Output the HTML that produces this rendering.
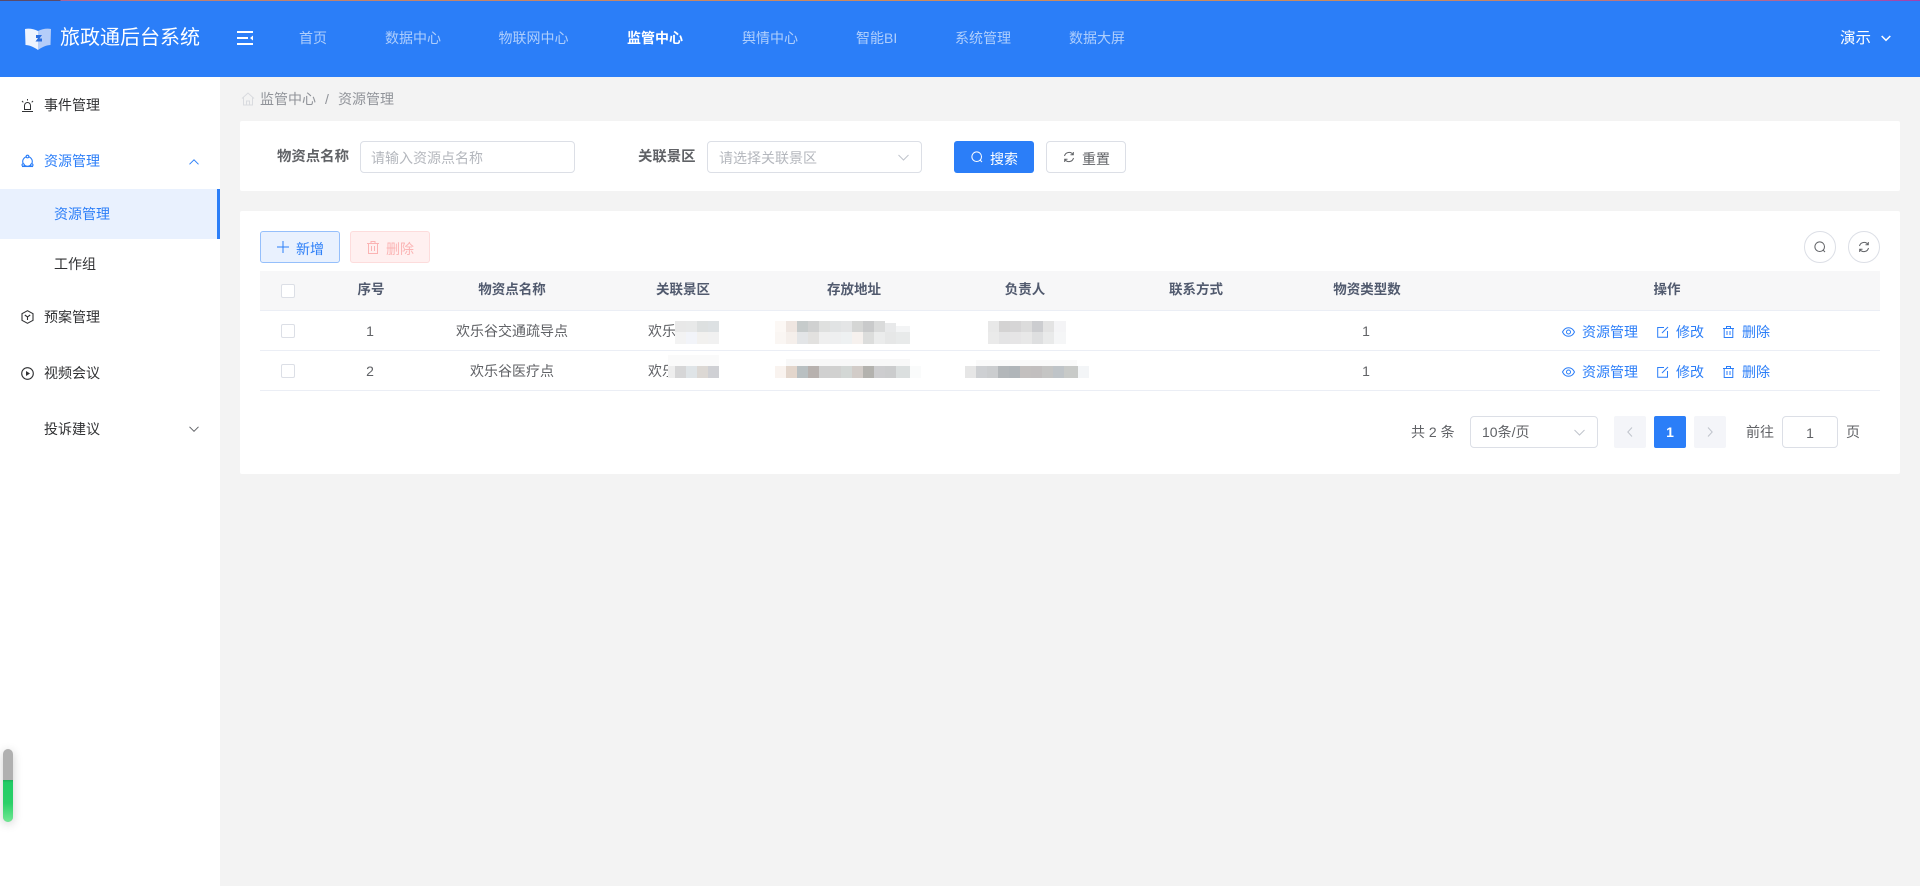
<!DOCTYPE html>
<html lang="zh-CN">
<head>
<meta charset="utf-8">
<title>资源管理</title>
<style>
*{box-sizing:border-box;margin:0;padding:0}
html,body{width:1920px;height:886px;overflow:hidden;background:#f3f3f3;font-family:"Liberation Sans","Noto Sans CJK SC",sans-serif;font-size:14px;color:#606266}
.a{position:absolute;white-space:nowrap}
.t{position:absolute;white-space:nowrap;line-height:20px;height:20px}
.c{position:absolute;white-space:nowrap;line-height:20px;height:20px;width:200px;text-align:center}
.n{color:rgba(255,255,255,.62);top:28px}
.h{font-weight:700;color:#515a6e;top:280px;font-size:13.500px}
.b{border:1px solid #dcdfe6;background:#fff;border-radius:4px}
.cb{position:absolute;left:281px;width:14px;height:14px;border:1px solid #dcdfe6;border-radius:2px;background:#fff}
.l{color:#2b7ef8}
.m{color:#303133}
svg{position:absolute;overflow:visible;fill:none}
</style>
</head>
<body>
<!-- header -->
<div class="a" style="left:0;top:0;width:1920px;height:77px;background:#2b7ef8"></div>
<div class="a" style="left:0;top:0;width:1920px;height:1px;background:linear-gradient(90deg,#5a4a6a 0,#5a4a6a 60px,#a8649a 61px,#c08070 170px,#cf8a5c 50%,#c98a60 75%,#b0609a 95%,#a040b0 100%)"></div>
<svg style="left:24px;top:28px" width="28" height="22" viewBox="0 0 28 22"><path d="M1 1C5 0 10 1 14 3V22C10 19 5 17 1.500 17Z" fill="#eef3fe"/><path d="M27 1C23 0 18 1 14 3V22C18 19 23 17 26.500 17Z" fill="#b5cdf9"/><path d="M12 7h6l-2.500 3.500H18v3h-6.500l2.500-3.500h-2z" fill="#2b6ee0"/></svg>
<div class="t" style="left:60px;top:25px;font-size:20px;line-height:26px;height:26px;color:#fff">旅政通后台系统</div>
<svg style="left:237px;top:31px" width="16" height="14" viewBox="0 0 16 14" fill="#fff"><rect x="0" y="0" width="16" height="2" fill="#fff"/><rect x="0" y="6" width="11" height="2" fill="#fff"/><rect x="0" y="12" width="16" height="2" fill="#fff"/><path d="M16 4.500v5l-3-2.500z" fill="#fff"/></svg>
<div class="t n" style="left:299px">首页</div>
<div class="t n" style="left:385px">数据中心</div>
<div class="t n" style="left:498.500px">物联网中心</div>
<div class="t n" style="left:627px;color:#fff;font-weight:700">监管中心</div>
<div class="t n" style="left:742px">舆情中心</div>
<div class="t n" style="left:856px">智能BI</div>
<div class="t n" style="left:955px">系统管理</div>
<div class="t n" style="left:1069px">数据大屏</div>
<div class="t" style="left:1840px;top:29px;font-size:15.500px;color:#fff">演示</div>
<svg style="left:1881px;top:35px" width="10" height="7" viewBox="0 0 10 7"><path d="M.7 1l4.300 4.300L9.300 1" stroke="#fff" stroke-width="1.500"/></svg>

<!-- sidebar -->
<div class="a" style="left:0;top:77px;width:220px;height:809px;background:#fff"></div>
<div class="a" style="left:0;top:189px;width:220px;height:50px;background:#e9f1fe"></div>
<div class="a" style="left:217px;top:189px;width:3px;height:50px;background:#2b7ef8"></div>
<svg style="left:21px;top:99px" width="13" height="13" viewBox="0 0 13 13" stroke="#303133" stroke-width="1"><path d="M1 12.500h11M3 10.500h7M3.500 10.500V6.500a3 3 0 016 0v4M6.500 0v1.500M1 2l1.300 1.300M12 2l-1.300 1.300"/></svg>
<div class="t m" style="left:44px;top:95px">事件管理</div>
<svg style="left:21px;top:154px" width="13" height="14" viewBox="0 0 13 14" stroke="#2b7ef8" stroke-width="1.100"><circle cx="6.500" cy="7.500" r="4.800"/><circle cx="6.500" cy="2.500" r="1.300" fill="#fff"/><path d="M1 12.500h11" /><circle cx="2.200" cy="11" r="1.200" fill="#fff"/><circle cx="10.800" cy="11" r="1.200" fill="#fff"/></svg>
<div class="t l" style="left:44px;top:151px">资源管理</div>
<svg style="left:189px;top:159px" width="10" height="6" viewBox="0 0 10 6"><path d="M.5 5.300L5 .8l4.500 4.500" stroke="#2b7ef8" stroke-width="1"/></svg>
<div class="t l" style="left:54px;top:204px">资源管理</div>
<div class="t m" style="left:54px;top:254px">工作组</div>
<svg style="left:21px;top:310px" width="13" height="14" viewBox="0 0 13 14" stroke="#303133" stroke-width="1.100"><path d="M6.500.7l5.500 3v6.600l-5.500 3-5.500-3V3.700zM3.800 5l2.700 2 2.700-2M6.500 7v3"/></svg>
<div class="t m" style="left:44px;top:307px">预案管理</div>
<svg style="left:21px;top:367px" width="13" height="13" viewBox="0 0 13 13" stroke="#303133" stroke-width="1.100"><circle cx="6.500" cy="6.500" r="5.800"/><path d="M5 4v5l4-2.500z" fill="#303133" stroke="none"/></svg>
<div class="t m" style="left:44px;top:363px">视频会议</div>
<div class="t m" style="left:44px;top:419px">投诉建议</div>
<svg style="left:189px;top:426px" width="10" height="6" viewBox="0 0 10 6"><path d="M.5.800L5 5.300 9.500.8" stroke="#606266" stroke-width="1"/></svg>
<!-- volume bar -->
<div class="a" style="left:3px;top:749px;width:10px;height:73px;border-radius:5px;overflow:hidden;background:#b0b0b0;box-shadow:0 2px 10px rgba(0,0,0,.2)"><div class="a" style="left:0;top:31px;width:10px;height:42px;background:linear-gradient(180deg,#1fae5a 0,#22cc66 6%,#2bd068 55%,#72e894 100%)"></div></div>

<!-- breadcrumb -->
<svg style="left:241px;top:92px" width="14" height="14" viewBox="0 0 14 14" stroke="#d9dbdf" stroke-width="1"><path d="M1 6.500L7 1l6 5.500M2.500 5.500V13h9V5.500M5.500 13V9h3v4"/></svg>
<div class="t" style="left:260px;top:89px;color:#909399">监管中心</div>
<div class="t" style="left:325px;top:89px;color:#909399">/</div>
<div class="t" style="left:338px;top:89px;color:#909399">资源管理</div>

<!-- search card -->
<div class="a" style="left:240px;top:121px;width:1660px;height:70px;background:#fff;border-radius:2px"></div>
<div class="t" style="left:277px;top:147px;font-weight:700;color:#606266;font-size:14.400px">物资点名称</div>
<div class="a b" style="left:360px;top:141px;width:215px;height:32px"></div>
<div class="t" style="left:371px;top:148px;color:#b4b7bd">请输入资源点名称</div>
<div class="t" style="left:638px;top:147px;font-weight:700;color:#606266;font-size:14.400px">关联景区</div>
<div class="a b" style="left:707px;top:141px;width:215px;height:32px"></div>
<div class="t" style="left:719px;top:148px;color:#b4b7bd">请选择关联景区</div>
<svg style="left:898px;top:154px" width="11" height="7" viewBox="0 0 11 7"><path d="M.5 1L5.500 6l5-5" stroke="#c0c4cc" stroke-width="1"/></svg>
<div class="a" style="left:954px;top:141px;width:80px;height:32px;background:#2b7ef8;border-radius:3px"></div>
<svg style="left:971px;top:151px" width="12" height="12" viewBox="0 0 12 12" stroke="#fff" stroke-width="1"><circle cx="5.700" cy="5.700" r="4.800"/><path d="M9 9l2 2"/></svg>
<div class="t" style="left:990px;top:149px;color:#fff">搜索</div>
<div class="a b" style="left:1046px;top:141px;width:80px;height:32px"></div>
<svg style="left:1063px;top:151px" width="12" height="12" viewBox="0 0 12 12" stroke="#606266" stroke-width="1"><path d="M1.500 5A4.700 4.700 0 0110 3.500M10.500 7A4.700 4.700 0 012 8.500M10.300 1v2.800H7.500M1.700 11V8.200h2.800"/></svg>
<div class="t" style="left:1082px;top:149px;color:#606266">重置</div>

<!-- table card -->
<div class="a" style="left:240px;top:211px;width:1660px;height:263px;background:#fff;border-radius:2px"></div>
<div class="a" style="left:260px;top:231px;width:80px;height:32px;background:#e9f1fe;border:1px solid #95bffb;border-radius:3px"></div>
<svg style="left:277px;top:241px" width="12" height="12" viewBox="0 0 12 12" stroke="#2b7ef8" stroke-width="1"><path d="M6 0v12M0 6h12"/></svg>
<div class="t l" style="left:296px;top:239px">新增</div>
<div class="a" style="left:350px;top:231px;width:80px;height:32px;background:#fff0f0;border:1px solid #fddcdc;border-radius:3px"></div>
<svg style="left:367px;top:241px" width="12" height="13" viewBox="0 0 12 13" stroke="#fbb4b4" stroke-width="1"><path d="M0 2.500h12M4 2.500V.5h4v2M1.500 2.500v10h9v-10M4.500 5v5M7.500 5v5"/></svg>
<div class="t" style="left:386px;top:239px;color:#fbb4b4">删除</div>
<div class="a" style="left:1804px;top:231px;width:32px;height:32px;border:1px solid #dcdfe6;border-radius:50%;background:#fff"></div>
<svg style="left:1814px;top:241px" width="12" height="12" viewBox="0 0 12 12" stroke="#606266" stroke-width="1"><circle cx="5.700" cy="5.700" r="4.800"/><path d="M9 9l2 2"/></svg>
<div class="a" style="left:1848px;top:231px;width:32px;height:32px;border:1px solid #dcdfe6;border-radius:50%;background:#fff"></div>
<svg style="left:1858px;top:241px" width="12" height="12" viewBox="0 0 12 12" stroke="#606266" stroke-width="1"><path d="M1.500 5A4.700 4.700 0 0110 3.500M10.500 7A4.700 4.700 0 012 8.500M10.300 1v2.800H7.500M1.700 11V8.200h2.800"/></svg>

<div class="a" style="left:260px;top:271px;width:1620px;height:40px;background:#f7f7f8;border-bottom:1px solid #ebeef5"></div>
<div class="a" style="left:260px;top:350px;width:1620px;height:1px;background:#ebeef5"></div>
<div class="a" style="left:260px;top:390px;width:1620px;height:1px;background:#ebeef5"></div>
<div class="cb" style="top:284px"></div>
<div class="cb" style="top:324px"></div>
<div class="cb" style="top:364px"></div>
<div class="c h" style="left:271px">序号</div>
<div class="c h" style="left:412px">物资点名称</div>
<div class="c h" style="left:583px">关联景区</div>
<div class="c h" style="left:754px">存放地址</div>
<div class="c h" style="left:925px">负责人</div>
<div class="c h" style="left:1096px">联系方式</div>
<div class="c h" style="left:1267px">物资类型数</div>
<div class="c h" style="left:1567px">操作</div>

<div class="c" style="left:270px;top:321px">1</div>
<div class="c" style="left:270px;top:361px">2</div>
<div class="c" style="left:412px;top:321px">欢乐谷交通疏导点</div>
<div class="c" style="left:412px;top:361px">欢乐谷医疗点</div>
<div class="t" style="left:648px;top:321px">欢乐</div>
<div class="t" style="left:648px;top:361px">欢乐</div>
<div class="c" style="left:1266px;top:321px">1</div>
<div class="c" style="left:1266px;top:361px">1</div>

<!-- mosaics -->
<svg style="left:0;top:0" width="1920" height="886" shape-rendering="crispEdges">
<g>
<path d="M675 321h11v11h-11z" fill="#e8e8e8"/><path d="M686 321h11v11h-11z" fill="#e8e9e9"/><path d="M697 321h11v11h-11z" fill="#dde0e0"/><path d="M708 321h11v11h-11z" fill="#dde1e3"/>
<path d="M675 332h11v12h-11z" fill="#f3f3f3"/><path d="M686 332h11v12h-11z" fill="#f2f4f9"/><path d="M697 332h11v12h-11z" fill="#f2f1ef"/><path d="M708 332h11v12h-11z" fill="#f1f1f1"/>

<path d="M775 321h11v11h-11z" fill="#fcf8f5"/><path d="M786 321h11v11h-11z" fill="#efe6e1"/><path d="M797 321h11v11h-11z" fill="#c6cbcb"/><path d="M808 321h11v11h-11z" fill="#d0d1d1"/><path d="M819 321h11v11h-11z" fill="#dfe0df"/><path d="M830 321h11v11h-11z" fill="#e1e3e4"/><path d="M841 321h11v11h-11z" fill="#e4e5e6"/><path d="M852 321h11v11h-11z" fill="#d5d6d5"/><path d="M863 321h11v11h-11z" fill="#c9cacb"/><path d="M874 321h11v11h-11z" fill="#dadbdb"/><path d="M885 323h11v9h-11z" fill="#e8e9ea"/><path d="M896 326h14v6h-14z" fill="#f3f4f5"/>
<path d="M775 332h11v12h-11z" fill="#faf6f3"/><path d="M786 332h11v12h-11z" fill="#f5efeb"/><path d="M797 332h11v12h-11z" fill="#e3e5e7"/><path d="M808 332h11v12h-11z" fill="#e2e1df"/><path d="M819 332h11v12h-11z" fill="#efefef"/><path d="M830 332h11v12h-11z" fill="#eeeff0"/><path d="M841 332h11v12h-11z" fill="#eef1f2"/><path d="M852 332h11v12h-11z" fill="#f6f1ee"/><path d="M863 332h11v12h-11z" fill="#dcdddc"/><path d="M874 332h11v12h-11z" fill="#ebecec"/><path d="M885 332h11v12h-11z" fill="#e6e7e7"/><path d="M896 332h14v12h-14z" fill="#e8eaea"/>

<path d="M988 321h11v11h-11z" fill="#e8e8e8"/><path d="M999 321h11v11h-11z" fill="#d4d3d3"/><path d="M1010 321h11v11h-11z" fill="#d6d5d6"/><path d="M1021 321h11v11h-11z" fill="#dcdcdc"/><path d="M1032 321h11v11h-11z" fill="#cccdd0"/><path d="M1043 321h11v11h-11z" fill="#e3e3e3"/><path d="M1054 321h12v11h-12z" fill="#f4f4f6"/>
<path d="M988 332h11v12h-11z" fill="#eaeaea"/><path d="M999 332h11v12h-11z" fill="#e4e4e5"/><path d="M1010 332h11v12h-11z" fill="#e6e5e6"/><path d="M1021 332h11v12h-11z" fill="#e8e8e8"/><path d="M1032 332h11v12h-11z" fill="#dedfe0"/><path d="M1043 332h11v12h-11z" fill="#e9eaea"/><path d="M1054 332h12v12h-12z" fill="#f5f6f7"/>

<path d="M668 355h51v11h-51z" fill="#fafafa"/>
<path d="M668 366h7v12h-7z" fill="#eeeeee"/><path d="M675 366h11v12h-11z" fill="#d6d6d7"/><path d="M686 366h11v12h-11z" fill="#dfe4e7"/><path d="M697 366h11v12h-11z" fill="#dcd8d4"/><path d="M708 366h11v12h-11z" fill="#cfd0d4"/>

<path d="M786 359h124v7h-124z" fill="#f8f8f8"/>
<path d="M775 366h11v12h-11z" fill="#f9f3ef"/><path d="M786 366h11v12h-11z" fill="#e3d6cc"/><path d="M797 366h11v12h-11z" fill="#b9c0c2"/><path d="M808 366h11v12h-11z" fill="#b7b1ae"/><path d="M819 366h11v12h-11z" fill="#d0d0d0"/><path d="M830 366h11v12h-11z" fill="#d1d1d0"/><path d="M841 366h11v12h-11z" fill="#d3d7d5"/><path d="M852 366h11v12h-11z" fill="#d2ccc8"/><path d="M863 366h11v12h-11z" fill="#b3b2ae"/><path d="M874 366h11v12h-11z" fill="#cdcdcf"/><path d="M885 366h11v12h-11z" fill="#cbcccd"/><path d="M896 366h14v12h-14z" fill="#dbdfdf"/><path d="M910 366h11v12h-11z" fill="#fafbfb"/>

<path d="M976 360h101v6h-101z" fill="#fafafa"/>
<path d="M965 366h11v12h-11z" fill="#e6e6e6"/><path d="M976 366h11v12h-11z" fill="#ced0d3"/><path d="M987 366h11v12h-11z" fill="#cbcdcf"/><path d="M998 366h11v12h-11z" fill="#b3b7ba"/><path d="M1009 366h11v12h-11z" fill="#b0b5b9"/><path d="M1020 366h11v12h-11z" fill="#c3c0bf"/><path d="M1031 366h11v12h-11z" fill="#c2bfbf"/><path d="M1042 366h11v12h-11z" fill="#c5c5c4"/><path d="M1053 366h11v12h-11z" fill="#bfc4c8"/><path d="M1064 366h14v12h-14z" fill="#c8cac8"/><path d="M1078 366h11v12h-11z" fill="#f3f5f7"/>
</g>
</svg>

<!-- actions rows -->
<svg style="left:1562px;top:327px" width="13" height="10" viewBox="0 0 13 10" stroke="#2b7ef8" stroke-width="1"><path d="M.5 5C2 2 4 .7 6.500.7S11 2 12.500 5C11 8 9 9.300 6.500 9.300S2 8 .5 5z"/><circle cx="6.500" cy="5" r="2"/></svg>
<div class="t l" style="left:1582px;top:322px">资源管理</div>
<svg style="left:1657px;top:326px" width="12" height="12" viewBox="0 0 12 12" stroke="#2b7ef8" stroke-width="1"><path d="M7 1.500H.7v9.800h9.800V5M5 7L11 1"/></svg>
<div class="t l" style="left:1676px;top:322px">修改</div>
<svg style="left:1723px;top:326px" width="11" height="12" viewBox="0 0 11 12" stroke="#2b7ef8" stroke-width="1"><path d="M0 2.500h11M3.500 2.500V.5h4v2M1.200 2.500v9h8.600v-9M4 5v4M7 5v4"/></svg>
<div class="t l" style="left:1742px;top:322px">删除</div>

<svg style="left:1562px;top:367px" width="13" height="10" viewBox="0 0 13 10" stroke="#2b7ef8" stroke-width="1"><path d="M.5 5C2 2 4 .7 6.500.7S11 2 12.500 5C11 8 9 9.300 6.500 9.300S2 8 .5 5z"/><circle cx="6.500" cy="5" r="2"/></svg>
<div class="t l" style="left:1582px;top:362px">资源管理</div>
<svg style="left:1657px;top:366px" width="12" height="12" viewBox="0 0 12 12" stroke="#2b7ef8" stroke-width="1"><path d="M7 1.500H.7v9.800h9.800V5M5 7L11 1"/></svg>
<div class="t l" style="left:1676px;top:362px">修改</div>
<svg style="left:1723px;top:366px" width="11" height="12" viewBox="0 0 11 12" stroke="#2b7ef8" stroke-width="1"><path d="M0 2.500h11M3.500 2.500V.5h4v2M1.200 2.500v9h8.600v-9M4 5v4M7 5v4"/></svg>
<div class="t l" style="left:1742px;top:362px">删除</div>

<!-- pagination -->
<div class="t" style="left:1411px;top:422px">共 2 条</div>
<div class="a b" style="left:1470px;top:416px;width:128px;height:32px"></div>
<div class="t" style="left:1482px;top:422px">10条/页</div>
<svg style="left:1574px;top:429px" width="11" height="7" viewBox="0 0 11 7"><path d="M.5 1L5.500 6l5-5" stroke="#c0c4cc" stroke-width="1"/></svg>
<div class="a" style="left:1614px;top:416px;width:32px;height:32px;background:#f4f5f9;border-radius:2px"></div>
<svg style="left:1627px;top:427px" width="6" height="10" viewBox="0 0 6 10"><path d="M5 .5L.8 5 5 9.500" stroke="#c0c4cc" stroke-width="1"/></svg>
<div class="a" style="left:1654px;top:416px;width:32px;height:32px;background:#2b7ef8;border-radius:2px;color:#fff;font-weight:700;text-align:center;line-height:32px">1</div>
<div class="a" style="left:1694px;top:416px;width:32px;height:32px;background:#f4f5f9;border-radius:2px"></div>
<svg style="left:1707px;top:427px" width="6" height="10" viewBox="0 0 6 10"><path d="M1 .5L5.200 5 1 9.500" stroke="#c0c4cc" stroke-width="1"/></svg>
<div class="t" style="left:1746px;top:422px">前往</div>
<div class="a b" style="left:1782px;top:416px;width:56px;height:32px;text-align:center;line-height:32px">1</div>
<div class="t" style="left:1846px;top:422px">页</div>
</body>
</html>
